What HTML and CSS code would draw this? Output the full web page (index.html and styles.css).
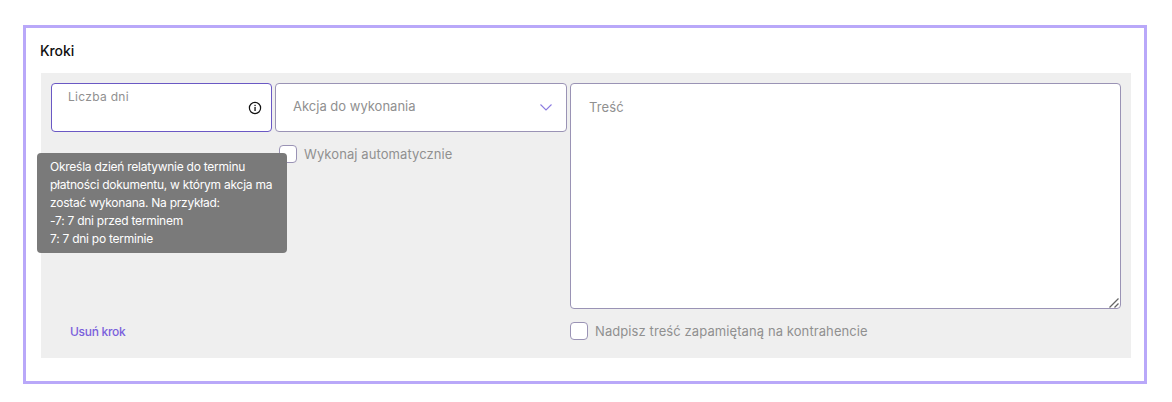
FILE: index.html
```html
<!DOCTYPE html>
<html lang="pl">
<head>
<meta charset="utf-8">
<title>Kroki</title>
<link rel="stylesheet" href="styles.css">
</head>
<body>
<section class="panel">
  <h2 class="title">Kroki</h2>
  <div class="steps">
    <div class="col col-days">
      <div class="field field-days">
        <span class="float-label">Liczba dni</span>
        <svg class="info" width="14" height="14" viewBox="0 0 14 14" aria-hidden="true">
          <circle cx="7" cy="7" r="5.6" fill="none" stroke="#111" stroke-width="1.2"/>
          <rect x="6.4" y="6" width="1.3" height="4" fill="#111"/>
          <rect x="6.4" y="3.8" width="1.3" height="1.3" fill="#111"/>
        </svg>
        <div class="tooltip">Określa dzień relatywnie do terminu płatności dokumentu, w którym akcja ma zostać wykonana. Na przykład:<br>-7: 7 dni przed terminem<br>7: 7 dni po terminie</div>
      </div>
      <a class="remove" href="#">Usuń krok</a>
    </div>
    <div class="col col-action">
      <div class="field field-select">
        <span class="select-text">Akcja do wykonania</span>
        <svg class="chevron" width="12" height="7" viewBox="0 0 12 7" aria-hidden="true">
          <path d="M0.5 0.5L6 6l5.5-5.5" fill="none" stroke="#8b7be0" stroke-width="1.1"/>
        </svg>
      </div>
      <label class="check check-auto"><span class="box"></span>Wykonaj automatycznie</label>
    </div>
    <div class="col col-content">
      <div class="content-wrap">
        <textarea class="content" placeholder="Treść"></textarea>
        <svg class="grip" width="10" height="10" viewBox="0 0 10 10" aria-hidden="true">
          <path d="M0.5 9.5L9.5 0.5M5.5 9.5L9.5 5.5" fill="none" stroke="#666" stroke-width="1.3"/>
        </svg>
      </div>
      <label class="check check-override"><span class="box"></span>Nadpisz treść zapamiętaną na kontrahencie</label>
    </div>
  </div>
</section>
</body>
</html>
```
FILE: styles.css
```css
* { box-sizing: border-box; }
html, body { height: 100%; }
body {
  margin: 0;
  padding: 25px 25px 18px 23px;
  background: #fff;
  font-family: Inter, "Liberation Sans", sans-serif;
}
.panel {
  height: 359px;
  border: 3px solid #b9a8f9;
  padding: 0 13px 23px 15px;
  display: flex;
  flex-direction: column;
}
.title {
  margin: 0;
  height: 45px;
  padding-top: 14px;
  font-size: 14px;
  line-height: 17px;
  font-weight: 500;
  letter-spacing: -0.1px;
  margin-left: -1px;
  color: #111;
}
.steps {
  flex: 1;
  background: #efefef;
  padding: 10px;
  display: grid;
  grid-template-columns: 221px 292px 551px;
  column-gap: 3px;
}
.col { display: flex; flex-direction: column; position: relative; }
.field {
  height: 49px;
  background: #fff;
  border-radius: 4px;
  position: relative;
}
.field-days { border: 1px solid #6a58c4; }
.float-label {
  position: absolute;
  left: 16px;
  top: 5px;
  font-size: 12px;
  line-height: 16px;
  letter-spacing: 0.3px;
  color: #909090;
}
.info { position: absolute; right: 9px; top: 17px; }
.tooltip {
  position: absolute;
  left: -15px;
  top: 69px;
  width: 250px;
  height: 100px;
  padding: 5px 13px;
  background: #7a7a7a;
  border-radius: 4px;
  color: #fff;
  font-size: 12px;
  line-height: 18px;
  letter-spacing: -0.25px;
  z-index: 2;
}
.remove {
  position: absolute;
  left: 19px;
  bottom: 8px;
  font-size: 12px;
  line-height: 16px;
  font-weight: 500;
  letter-spacing: -0.3px;
  color: #7a5fdc;
  text-decoration: none;
}
.field-select {
  border: 1px solid #9a93b5;
  display: flex;
  align-items: center;
  justify-content: space-between;
  padding: 0 14px 4px 17px;
}
.select-text {
  font-size: 13px;
  letter-spacing: 0;
  color: #909090;
}
.chevron { margin-top: 4px; }
.check {
  display: flex;
  align-items: center;
  gap: 7px;
  font-size: 13px;
  line-height: 18px;
  letter-spacing: 0.09px;
  color: #909090;
}
.box {
  width: 18px;
  height: 18px;
  background: #fff;
  border: 1px solid #9a93b5;
  border-radius: 4px;
  flex: none;
}
.check-auto { margin: 13px 0 0 4px; }
.content-wrap { position: relative; height: 226px; }
.content {
  display: block;
  width: 551px;
  height: 226px;
  margin: 0;
  padding: 15px 18px;
  background: #fff;
  border: 1px solid #9a93b5;
  border-radius: 4px;
  outline: none;
  resize: none;
  font-family: inherit;
  font-size: 13px;
  line-height: 16px;
  letter-spacing: 0.1px;
}
.content::placeholder { color: #909090; opacity: 1; }
.grip { position: absolute; right: 2px; bottom: 1px; pointer-events: none; }
.check-override { margin-top: 13px; }
```
